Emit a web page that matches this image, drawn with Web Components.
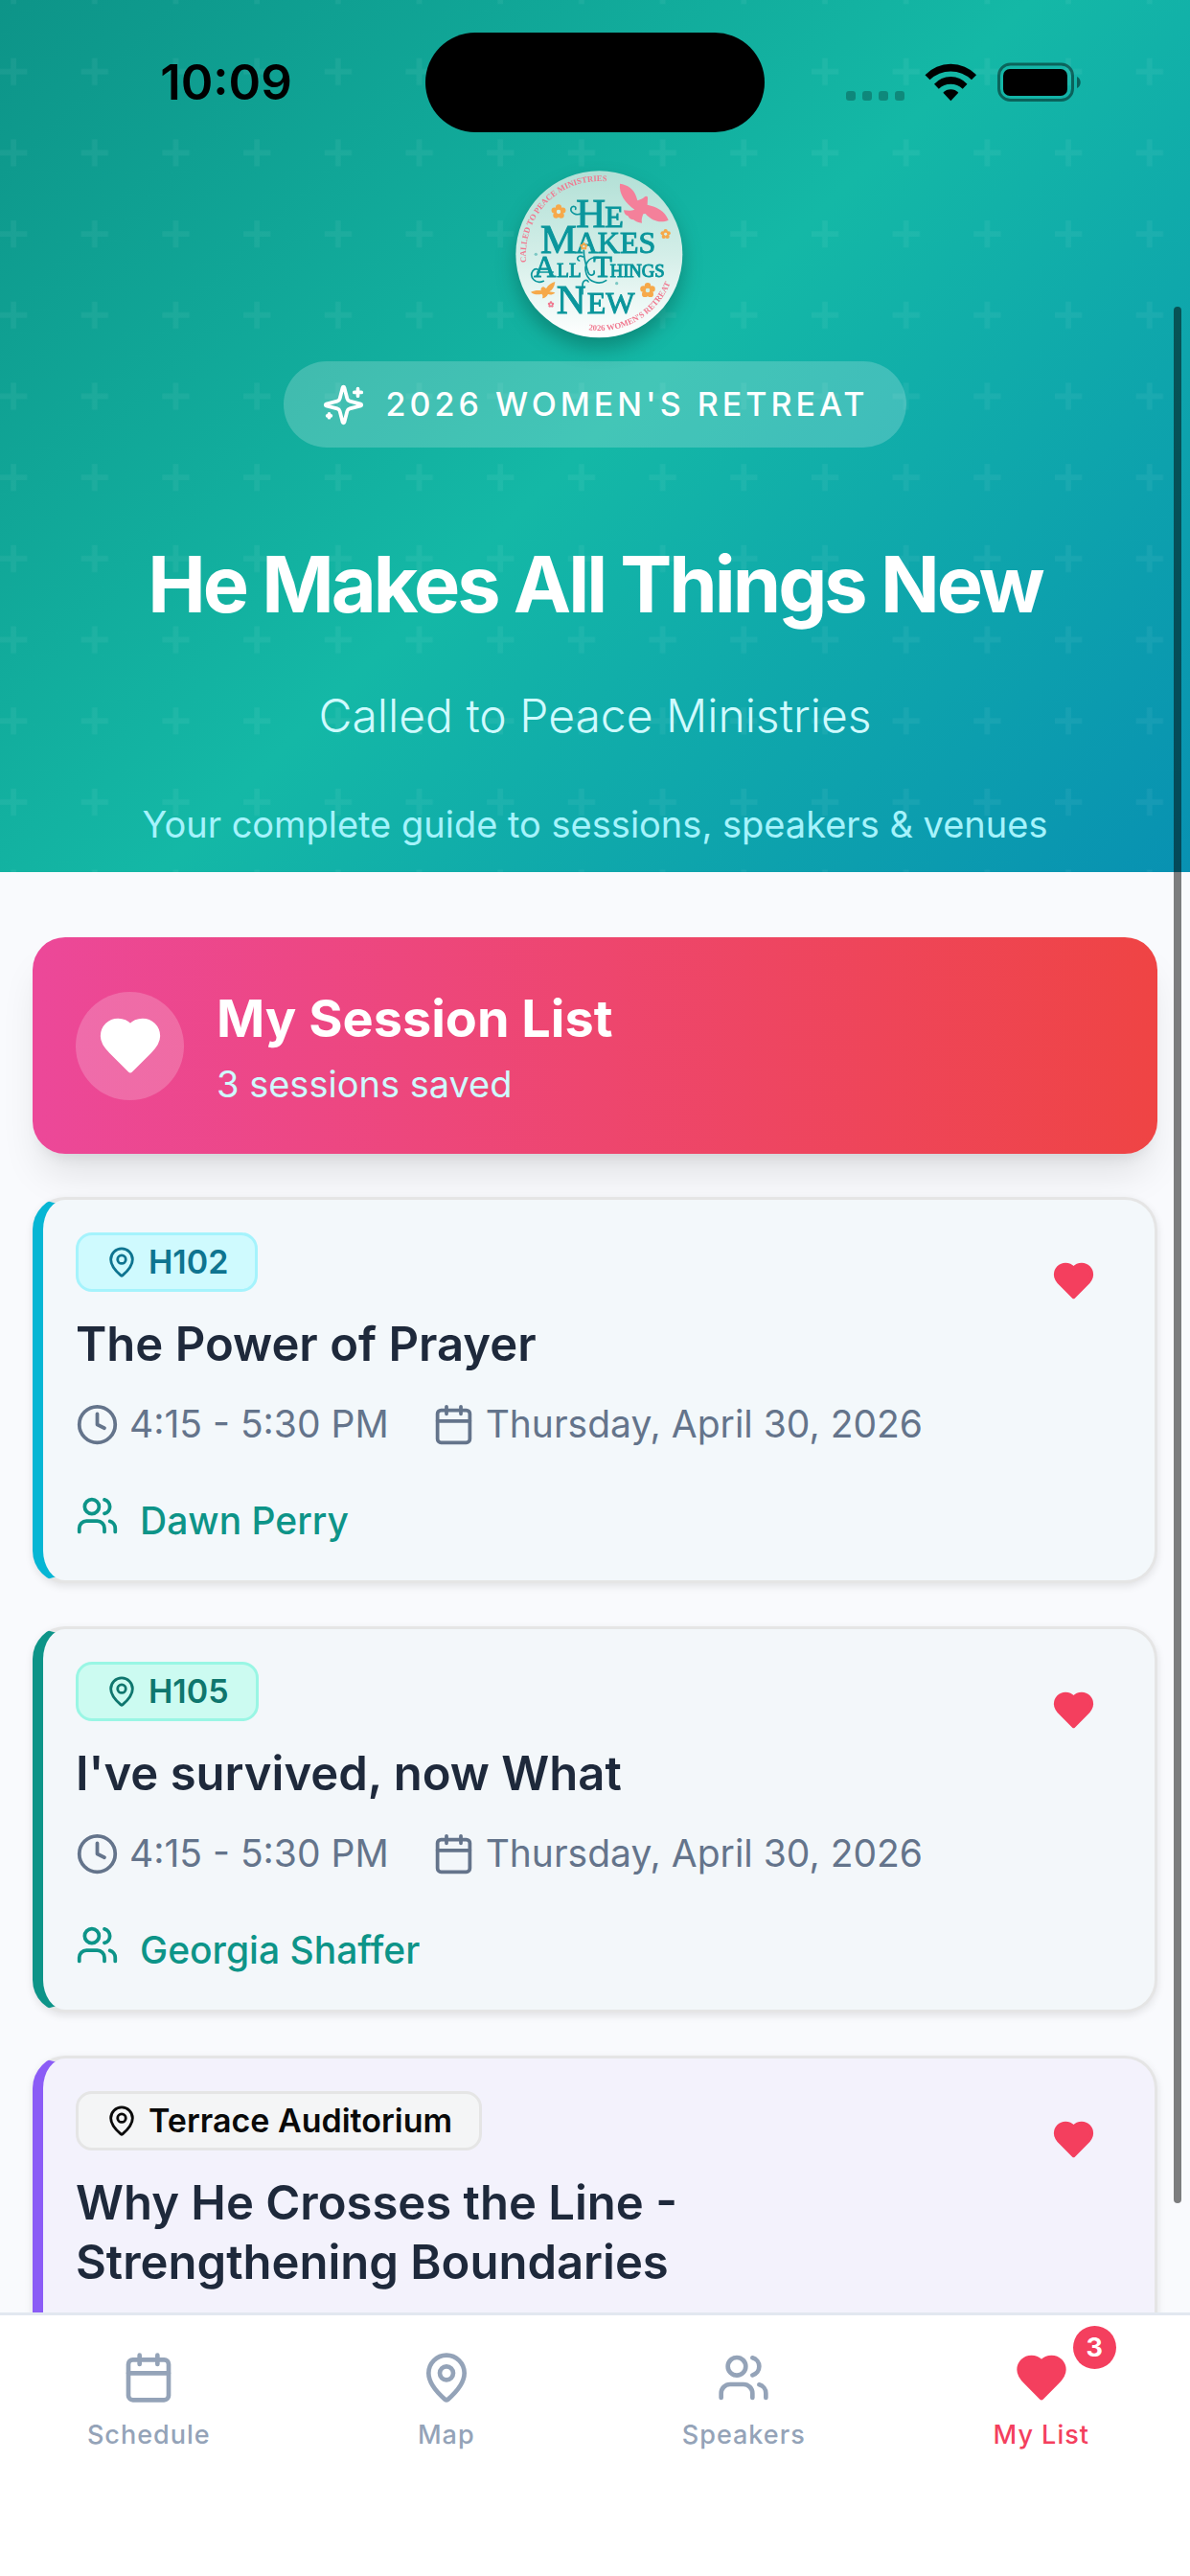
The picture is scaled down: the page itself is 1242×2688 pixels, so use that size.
<!DOCTYPE html>
<html lang="en">
<head>
<meta charset="utf-8">
<meta name="viewport" content="width=device-width, initial-scale=1">
<title>He Makes All Things New</title>
<style>
  body {
    margin: 0;
    font-family: Inter, "Liberation Sans", sans-serif;
  }
</style>
</head>
<body>
<retreat-app></retreat-app>

<script>
const icons = {
  sparkles: `<path d="M9.937 15.5A2 2 0 0 0 8.5 14.063l-6.135-1.582a.5.5 0 0 1 0-.962L8.5 9.936A2 2 0 0 0 9.937 8.5l1.582-6.135a.5.5 0 0 1 .963 0L14.063 8.5A2 2 0 0 0 15.5 9.937l6.135 1.581a.5.5 0 0 1 0 .964L15.5 14.063a2 2 0 0 0-1.437 1.437l-1.582 6.135a.5.5 0 0 1-.963 0z"/><path d="M20 3v4M22 5h-4M4 17v2M5 18H3"/>`,
  heart: `<path fill="currentColor" d="M19 14c1.49-1.46 3-3.21 3-5.5A5.5 5.5 0 0 0 16.5 3c-1.76 0-3 .5-4.5 2-1.5-1.5-2.74-2-4.5-2A5.5 5.5 0 0 0 2 8.5c0 2.3 1.5 4.05 3 5.5l7 7Z"/>`,
  pin: `<path d="M20 10c0 4.993-5.539 10.193-7.399 11.799a1 1 0 0 1-1.202 0C9.539 20.193 4 14.993 4 10a8 8 0 0 1 16 0"/><circle cx="12" cy="10" r="3"/>`,
  clock: `<circle cx="12" cy="12" r="10"/><path d="M12 6v6l4 2"/>`,
  calendar: `<path d="M8 2v4M16 2v4M3 10h18"/><rect x="3" y="4" width="18" height="18" rx="2"/>`,
  users: `<path d="M16 21v-2a4 4 0 0 0-4-4H6a4 4 0 0 0-4 4v2"/><circle cx="9" cy="7" r="4"/><path d="M22 21v-2a4 4 0 0 0-3-3.87M16 3.13a4 4 0 0 1 0 7.75"/>`,
};

const sessions = [
  {
    room: "H102",
    title: "The Power of Prayer",
    time: "4:15 - 5:30 PM",
    day: "Thursday, April 30, 2026",
    speaker: "Dawn Perry",
    theme: "cyan",
  },
  {
    room: "H105",
    title: "I've survived, now What",
    time: "4:15 - 5:30 PM",
    day: "Thursday, April 30, 2026",
    speaker: "Georgia Shaffer",
    theme: "teal",
  },
  {
    room: "Terrace Auditorium",
    title: "Why He Crosses the Line - Strengthening Boundaries",
    theme: "violet",
  },
];

const tabs = [
  { label: "Schedule", icon: "calendar", href: "#schedule" },
  { label: "Map", icon: "pin", href: "#map" },
  { label: "Speakers", icon: "users", href: "#speakers" },
  { label: "My List", icon: "heart", href: "#my-list", active: true, count: 3 },
];

class UiIcon extends HTMLElement {
  connectedCallback() {
    this.attachShadow({ mode: "open" }).innerHTML = `
<style>
  :host { display: block; flex: none; width: 45px; height: 45px; }
  svg { display: block; width: 100%; height: 100%; }
</style>
<svg viewBox="0 0 24 24" fill="none" stroke="currentColor" stroke-width="2"
  stroke-linecap="round" stroke-linejoin="round" aria-hidden="true">${icons[this.getAttribute("name")]}</svg>`;
  }
}

class StatusBar extends HTMLElement {
  connectedCallback() {
    this.attachShadow({ mode: "open" }).innerHTML = `
<style>
  :host {
    display: grid;
    grid-template-columns: 1fr 354px 1fr;
    align-items: center;
    justify-items: center;
    padding: 34px 28px 0;
    color: #000;
  }
  time { font-size: 51px; font-weight: 600; line-height: 62px; }
  .island { width: 354px; height: 104px; border-radius: 52px; background: #000; }
  .signals { width: 246px; height: 42px; }
</style>
<time>10:09</time>
<div class="island"></div>
<svg class="signals" viewBox="0 0 246 42" aria-hidden="true">
  <g fill-opacity=".25">
    <rect y="30" width="10" height="10" rx="3"/>
    <rect x="17" y="30" width="10" height="10" rx="3"/>
    <rect x="34" y="30" width="10" height="10" rx="3"/>
    <rect x="51" y="30" width="10" height="10" rx="3"/>
  </g>
  <path d="M82.500 13.300a37 37 0 0 1 53.500 0l-5 5a31 31 0 0 0-43.500 0z"/>
  <path d="M92 22.800a23 23 0 0 1 34.500 0l-4.800 5a18 18 0 0 0-24.900 0z"/>
  <path d="M101.300 31.800a11 11 0 0 1 16 0l-8 8.500z"/>
  <rect x="159.500" y="2" width="77" height="37.500" rx="12" fill="none" stroke="#000" stroke-opacity=".45" stroke-width="3"/>
  <rect x="164" y="7" width="67" height="28" rx="7"/>
  <path d="M241 15c5 2 5 10 0 12z" fill-opacity=".45"/>
</svg>`;
  }
}

const flower = (x, y, r, color) => `
<g transform="translate(${x} ${y}) scale(${r / 10})" fill="${color}">
  <circle cy="-6" r="4"/><circle cx="5.700" cy="-1.800" r="4"/><circle cx="3.500" cy="4.900" r="4"/>
  <circle cx="-3.500" cy="4.900" r="4"/><circle cx="-5.700" cy="-1.800" r="4"/>
  <circle r="2.800" fill="#d5efe8"/>
</g>`;

class RetreatLogo extends HTMLElement {
  connectedCallback() {
    this.attachShadow({ mode: "open" }).innerHTML = `
<style>
  :host { display: block; }
  svg {
    display: block;
    width: 182px;
    height: 174px;
    overflow: visible;
    filter: drop-shadow(0 11px 10px rgba(0, 60, 50, .35));
  }
  text { font-family: "Liberation Serif", serif; }
  .title { fill: #0b969c; font-weight: 400; stroke: #0b969c; stroke-width: 3; }
  .ring { fill: #f0788f; font-weight: 700; font-size: 26px; }
  .big { font-size: 128px; }
  .mid { font-size: 96px; }
  .small { font-size: 62px; }
  .tiny { font-size: 56px; }
</style>
<svg viewBox="28 54 546 522" role="img" aria-label="He Makes All Things New">
  <defs>
    <linearGradient id="disc" x1="0" y1="0" x2="0" y2="1">
      <stop offset="0" stop-color="#b2e0d6"/>
      <stop offset=".5" stop-color="#d3eee8"/>
      <stop offset="1" stop-color="#fff"/>
    </linearGradient>
    <path id="over" d="M86 341A229 229 0 0 1 400 104"/>
    <path id="under" d="M281 553A240 240 0 0 0 552 350"/>
  </defs>
  <circle cx="314" cy="316" r="261" fill="url(#disc)"/>
  <text class="ring"><textPath href="#over">CALLED TO PEACE MINISTRIES</textPath></text>
  <text class="ring"><textPath href="#under">2026 WOMEN'S RETREAT</textPath></text>
  <text class="title" y="232"><tspan class="big" x="242">H</tspan><tspan class="mid" x="332">E</tspan></text>
  <text class="title" y="312"><tspan class="big" x="130">M</tspan><tspan class="mid" x="240">AKES</tspan></text>
  <text class="title" y="388"><tspan class="mid" x="110">A</tspan><tspan class="small" x="182">LL</tspan></text>
  <text class="title" y="388"><tspan class="mid" x="296">T</tspan><tspan class="tiny" x="348">HINGS</tspan></text>
  <text class="title" y="500"><tspan class="big" x="180">N</tspan><tspan class="mid" x="276">EW</tspan></text>
  <g fill="none" stroke="#0b969c" stroke-width="5" stroke-linecap="round">
    <path d="M262 186c-18 12-40 0-36-14 4-10 18-6 14 3"/>
    <path d="M140 400c-26 12-46-14-34-32 10-12 24-4 18 8M120 372h50"/>
    <path d="M266 304c0 30 8 50 14 70 6 14 22 6 18-6"/>
    <path d="M312 326c-30-4-48 22-38 52 8 24 40 36 62 20"/>
    <path d="M264 324c-16-8-24 8-12 12"/>
    <path d="M262 440v-30c2-14 14-16 18-8"/>
  </g>
  ${flower(187, 183, 23, "#f6a94a")}
  ${flower(522, 253, 16, "#f6a94a")}
  ${flower(466, 429, 24, "#f6a94a")}
  ${flower(266, 291, 12, "#f6a94a")}
  ${flower(163, 473, 10, "#f0788f")}
  <circle cx="116" cy="316" r="5" fill="#7cc8c4"/>
  <circle cx="369" cy="407" r="5" fill="#7cc8c4"/>
  <path fill="#f4809a" d="M379 95c24 4 42 14 51 40l4 13c8-4 16-4 23-12 3-4 11-1 9 5l-1 20c30 6 55 20 66 48-24 11-52 3-72-20l-7 1c-4 10-6 18-4 28-12-1-20-4-26-10-8 0-14-4-18-12-8-2-12-8-13-18 12 1 24 2 34-2-28-20-50-48-46-81z"/>
  <path fill="#f6a94a" d="M176 402c-2 16-8 26-18 31 6 2 14 1 18 4-8 6-16 6-22 4-4 8-10 12-18 13 2-6 2-10-2-14-12 4-26 2-34-6 10-4 22-6 32-4-2-6 2-12 8-12l8 5c8-12 16-18 28-21z"/>
</svg>`;
  }
}

class RetreatHero extends HTMLElement {
  connectedCallback() {
    this.attachShadow({ mode: "open" }).innerHTML = `
<style>
  :host {
    display: block;
    position: relative;
    background: linear-gradient(135deg, #0d9488, #14b8a6 50%, #0891b2);
    color: #fff;
    text-align: center;
  }
  .pattern { position: absolute; inset: 0; width: 100%; height: 100%; }
  .content {
    position: relative;
    display: flex;
    flex-direction: column;
    align-items: center;
    padding-bottom: 22px;
  }
  status-bar { align-self: stretch; }
  retreat-logo { margin-top: 40px; }
  .pill {
    display: flex;
    align-items: center;
    gap: 22px;
    margin-top: 25px;
    padding: 0 40px;
    border-radius: 45px;
    background: rgba(255, 255, 255, .2);
    font-size: 34px;
    font-weight: 500;
    line-height: 90px;
    letter-spacing: 4px;
    text-transform: uppercase;
  }
  h1 {
    margin: 92px 0 0;
    font-size: 81px;
    font-weight: 700;
    line-height: 102px;
    letter-spacing: -3px;
  }
  p { margin: 46px 0 0; }
  .host { font-size: 48px; font-weight: 300; line-height: 79px; color: #cffafe; }
  .tagline { font-size: 38px; line-height: 56px; color: #a5f3fc; }
</style>
<svg class="pattern" aria-hidden="true">
  <defs>
    <pattern id="plus" width="30" height="30" patternUnits="userSpaceOnUse" patternTransform="translate(0 -24) scale(2.823)">
      <path d="M6 4V0H4v4H0v2h4v4h2V6h4V4z" fill="#fff" fill-opacity=".05"/>
    </pattern>
  </defs>
  <rect width="100%" height="100%" fill="url(#plus)"/>
</svg>
<div class="content">
  <status-bar></status-bar>
  <retreat-logo></retreat-logo>
  <div class="pill"><ui-icon name="sparkles"></ui-icon><span>2026 Women's Retreat</span></div>
  <h1>He Makes All Things New</h1>
  <p class="host">Called to Peace Ministries</p>
  <p class="tagline">Your complete guide to sessions, speakers &amp; venues</p>
</div>`;
  }
}

class ListBanner extends HTMLElement {
  connectedCallback() {
    this.attachShadow({ mode: "open" }).innerHTML = `
<style>
  :host {
    display: flex;
    align-items: center;
    gap: 34px;
    padding: 45px;
    border-radius: 34px;
    background: linear-gradient(to right, #ec4899, #ef4444);
    box-shadow: 0 28px 42px -8px rgba(0, 0, 0, .1), 0 11px 17px -11px rgba(0, 0, 0, .12);
    color: #fff;
  }
  .circle {
    display: grid;
    place-items: center;
    flex: none;
    width: 113px;
    height: 113px;
    border-radius: 50%;
    background: rgba(255, 255, 255, .2);
  }
  ui-icon { width: 68px; height: 68px; }
  h2 { margin: 0; font-size: 54px; font-weight: 700; line-height: 80px; }
  p { margin: 0; font-size: 38px; line-height: 56px; color: #cffafe; }
</style>
<div class="circle"><ui-icon name="heart"></ui-icon></div>
<div>
  <h2><slot></slot></h2>
  <p><slot name="note"></slot></p>
</div>`;
  }
}

class SessionCard extends HTMLElement {
  connectedCallback() {
    const { room, time, day, speaker } = this.dataset;
    this.attachShadow({ mode: "open" }).innerHTML = `
<style>
  :host {
    --accent: #06b6d4;
    --surface: #f3f8fb;
    --badge: #cffafe;
    --badge-border: #a5f3fc;
    --badge-text: #0e7490;
    display: block;
    box-sizing: border-box;
    min-height: 403px;
    padding: 34px;
    border: 3px solid #e5e5e5;
    border-left: 11px solid var(--accent);
    border-radius: 34px;
    background: var(--surface);
    box-shadow: 0 3px 8px rgba(0, 0, 0, .1);
  }
  :host([theme="teal"]) {
    --accent: #0d9488;
    --surface: #f3f7fa;
    --badge: #ccfbf1;
    --badge-border: #99f6e4;
    --badge-text: #0f766e;
  }
  :host([theme="violet"]) {
    --accent: #8b5cf6;
    --surface: #f3f2fc;
    --badge: #f4f5f6;
    --badge-border: #e5e5e5;
    --badge-text: #0a0a0a;
  }
  header { display: flex; align-items: flex-start; justify-content: space-between; }
  .badge {
    display: inline-flex;
    align-items: center;
    gap: 11px;
    padding: 6px 28px;
    border: 3px solid var(--badge-border);
    border-radius: 17px;
    background: var(--badge);
    color: var(--badge-text);
    font-size: 34px;
    font-weight: 600;
    line-height: 44px;
    vertical-align: top;
  }
  .badge ui-icon { width: 34px; height: 34px; }
  h3 {
    max-width: 720px;
    margin: 24px 0 0;
    color: #1e293b;
    font-size: 49px;
    font-weight: 600;
    line-height: 62px;
  }
  button {
    display: grid;
    place-items: center;
    flex: none;
    width: 101px;
    height: 101px;
    padding: 0;
    border: 0;
    background: none;
    color: #f43f5e;
  }
  .when {
    display: flex;
    flex-wrap: wrap;
    gap: 45px;
    margin-top: 24px;
    color: #64748b;
    font-size: 39px;
    line-height: 56px;
  }
  .when span { display: flex; align-items: center; gap: 11px; }
  .who {
    display: flex;
    gap: 22px;
    margin-top: 45px;
    color: #0d9488;
    font-size: 39px;
    font-weight: 500;
    line-height: 56px;
  }
</style>
<header>
  <div>
    <div class="badge"><ui-icon name="pin"></ui-icon>${room}</div>
    <h3><slot></slot></h3>
  </div>
  <button type="button" aria-label="Remove from my list"><ui-icon name="heart"></ui-icon></button>
</header>
${time ? `<div class="when">
  <span><ui-icon name="clock"></ui-icon>${time}</span>
  <span><ui-icon name="calendar"></ui-icon>${day}</span>
</div>` : ""}
${speaker ? `<div class="who"><ui-icon name="users"></ui-icon>${speaker}</div>` : ""}`;
  }
}

class TabBar extends HTMLElement {
  connectedCallback() {
    this.attachShadow({ mode: "open" }).innerHTML = `
<style>
  :host {
    display: block;
    padding: 37px 0 126px;
    border-top: 3px solid #e2e8f0;
    background: #fff;
  }
  nav { display: grid; grid-template-columns: repeat(4, 1fr); }
  a {
    display: flex;
    flex-direction: column;
    align-items: center;
    gap: 11px;
    color: #94a3b8;
    font-size: 27px;
    font-weight: 500;
    line-height: 42px;
    letter-spacing: 1px;
    text-decoration: none;
  }
  a[aria-current] { color: #f43f5e; }
  .icon { position: relative; }
  ui-icon { width: 56px; height: 56px; }
  .count {
    position: absolute;
    top: -26px;
    right: -50px;
    width: 45px;
    border-radius: 50%;
    background: #f43f5e;
    color: #fff;
    font-weight: 700;
    line-height: 45px;
    letter-spacing: 0;
    text-align: center;
  }
</style>
<nav>
  ${tabs.map((tab) => `
  <a href="${tab.href}" ${tab.active ? `aria-current="page"` : ""}>
    <span class="icon"><ui-icon name="${tab.icon}"></ui-icon>${tab.count ? `<span class="count">${tab.count}</span>` : ""}</span>
    <span>${tab.label}</span>
  </a>`).join("")}
</nav>`;
  }
}

class RetreatApp extends HTMLElement {
  connectedCallback() {
    this.attachShadow({ mode: "open" }).innerHTML = `
<style>
  :host {
    display: flex;
    flex-direction: column;
    height: 100vh;
    background: #f9fafd;
  }
  .scroll { position: relative; flex: 1; min-height: 0; overflow: hidden; }
  main {
    display: flex;
    flex-direction: column;
    gap: 45px;
    padding: 68px 34px 45px;
  }
  .thumb {
    position: absolute;
    top: 320px;
    right: 9px;
    bottom: 114px;
    width: 8px;
    border-radius: 4px;
    background: rgba(0, 0, 0, .5);
  }
</style>
<div class="scroll">
  <retreat-hero></retreat-hero>
  <main>
    <list-banner>My Session List<span slot="note">${sessions.length} sessions saved</span></list-banner>
    ${sessions.map((s) => `
    <session-card theme="${s.theme}" data-room="${s.room}" data-time="${s.time || ""}"
      data-day="${s.day || ""}" data-speaker="${s.speaker || ""}">${s.title}</session-card>`).join("")}
  </main>
  <div class="thumb"></div>
</div>
<tab-bar></tab-bar>`;
  }
}

customElements.define("ui-icon", UiIcon);
customElements.define("status-bar", StatusBar);
customElements.define("retreat-logo", RetreatLogo);
customElements.define("retreat-hero", RetreatHero);
customElements.define("list-banner", ListBanner);
customElements.define("session-card", SessionCard);
customElements.define("tab-bar", TabBar);
customElements.define("retreat-app", RetreatApp);
</script>
</body>
</html>
